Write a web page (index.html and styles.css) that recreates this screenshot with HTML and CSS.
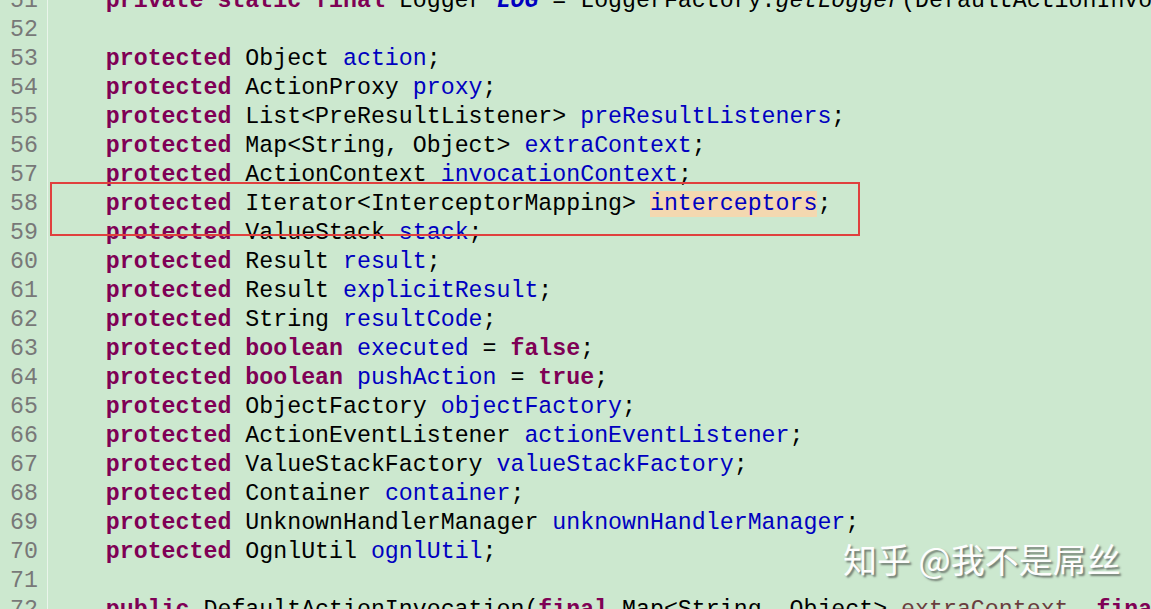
FILE: index.html
```html
<!DOCTYPE html>
<html lang="zh">
<head>
    <meta charset="UTF-8">
    <meta name="viewport" content="width=device-width, initial-scale=1.0">
    <title>DefaultActionInvocation.java</title>
    <link rel="stylesheet" href="styles.css">
</head>
<body>
    <div class="editor">
        <div class="row"><span class="ln">51</span><span class="code">    <span class="kw">private static final</span> Logger <span class="const">LOG</span> = LoggerFactory.<i>getLogger</i>(DefaultActionInvocation.<span class="kw">class</span>);</span></div>
        <div class="row"><span class="ln">52</span><span class="code"> </span></div>
        <div class="row"><span class="ln">53</span><span class="code">    <span class="kw">protected</span> Object <span class="fld">action</span>;</span></div>
        <div class="row"><span class="ln">54</span><span class="code">    <span class="kw">protected</span> ActionProxy <span class="fld">proxy</span>;</span></div>
        <div class="row"><span class="ln">55</span><span class="code">    <span class="kw">protected</span> List&lt;PreResultListener&gt; <span class="fld">preResultListeners</span>;</span></div>
        <div class="row"><span class="ln">56</span><span class="code">    <span class="kw">protected</span> Map&lt;String, Object&gt; <span class="fld">extraContext</span>;</span></div>
        <div class="row"><span class="ln">57</span><span class="code">    <span class="kw">protected</span> ActionContext <span class="fld">invocationContext</span>;</span></div>
        <div class="row"><span class="ln">58</span><span class="code">    <span class="kw">protected</span> Iterator&lt;InterceptorMapping&gt; <span class="fld mark">interceptors</span>;</span></div>
        <div class="row"><span class="ln">59</span><span class="code">    <span class="kw">protected</span> ValueStack <span class="fld">stack</span>;</span></div>
        <div class="row"><span class="ln">60</span><span class="code">    <span class="kw">protected</span> Result <span class="fld">result</span>;</span></div>
        <div class="row"><span class="ln">61</span><span class="code">    <span class="kw">protected</span> Result <span class="fld">explicitResult</span>;</span></div>
        <div class="row"><span class="ln">62</span><span class="code">    <span class="kw">protected</span> String <span class="fld">resultCode</span>;</span></div>
        <div class="row"><span class="ln">63</span><span class="code">    <span class="kw">protected boolean</span> <span class="fld">executed</span> = <span class="kw">false</span>;</span></div>
        <div class="row"><span class="ln">64</span><span class="code">    <span class="kw">protected boolean</span> <span class="fld">pushAction</span> = <span class="kw">true</span>;</span></div>
        <div class="row"><span class="ln">65</span><span class="code">    <span class="kw">protected</span> ObjectFactory <span class="fld">objectFactory</span>;</span></div>
        <div class="row"><span class="ln">66</span><span class="code">    <span class="kw">protected</span> ActionEventListener <span class="fld">actionEventListener</span>;</span></div>
        <div class="row"><span class="ln">67</span><span class="code">    <span class="kw">protected</span> ValueStackFactory <span class="fld">valueStackFactory</span>;</span></div>
        <div class="row"><span class="ln">68</span><span class="code">    <span class="kw">protected</span> Container <span class="fld">container</span>;</span></div>
        <div class="row"><span class="ln">69</span><span class="code">    <span class="kw">protected</span> UnknownHandlerManager <span class="fld">unknownHandlerManager</span>;</span></div>
        <div class="row"><span class="ln">70</span><span class="code">    <span class="kw">protected</span> OgnlUtil <span class="fld">ognlUtil</span>;</span></div>
        <div class="row"><span class="ln">71</span><span class="code"> </span></div>
        <div class="row"><span class="ln">72<span class="fold"></span></span><span class="code">    <span class="kw">public</span> DefaultActionInvocation(<span class="kw">final</span> Map&lt;String, Object&gt; <span class="param">extraContext</span>, <span class="kw">final boolean</span> <span class="param">pushAction</span>) {</span></div>
    </div>

    <div class="callout"></div>
    <div class="watermark">知乎 @我不是屌丝</div>
</body>
</html>
```

FILE: styles.css
```css
html, body {
    margin: 0;
    height: 100%;
    overflow: hidden;
}

body {
    background: #cce8cf;
    position: relative;
    font-family: "Liberation Mono", "DejaVu Sans Mono", monospace;
    font-size: 23.25px;
}

.editor {
    margin-top: -13.5px;
}

.row {
    display: flex;
    height: 29px;
    line-height: 29px;
}

.ln {
    position: relative;
    flex: 0 0 38px;
    text-align: right;
    color: #787878;
    padding-right: 9px;
    border-right: 1px solid #eaf5eb;
}

.fold {
    position: absolute;
    left: 38px;
    top: 14px;
    width: 6px;
    height: 6px;
    border: 1px solid #9aa6a0;
    border-radius: 50%;
    background: #e6efe8;
}

.code {
    padding-left: 2px;
    white-space: pre;
    color: #000;
}

.kw {
    color: #7f0055;
    font-weight: bold;
}

.fld {
    color: #0000c0;
}

.const {
    color: #0000c0;
    font-weight: bold;
    font-style: italic;
}

.param {
    color: #6a3e3e;
}

.mark {
    background: #f4d8b0;
}

.callout {
    position: absolute;
    left: 50px;
    top: 182px;
    width: 806px;
    height: 50px;
    border: 2px solid #e0403e;
}

.watermark {
    position: absolute;
    left: 843px;
    top: 536px;
    font-family: "Noto Sans CJK SC", "Noto Sans", sans-serif;
    font-size: 34px;
    line-height: 46px;
    color: #fdfdfd;
    text-shadow: 2px 2px 2px #6f7a70;
}
```
